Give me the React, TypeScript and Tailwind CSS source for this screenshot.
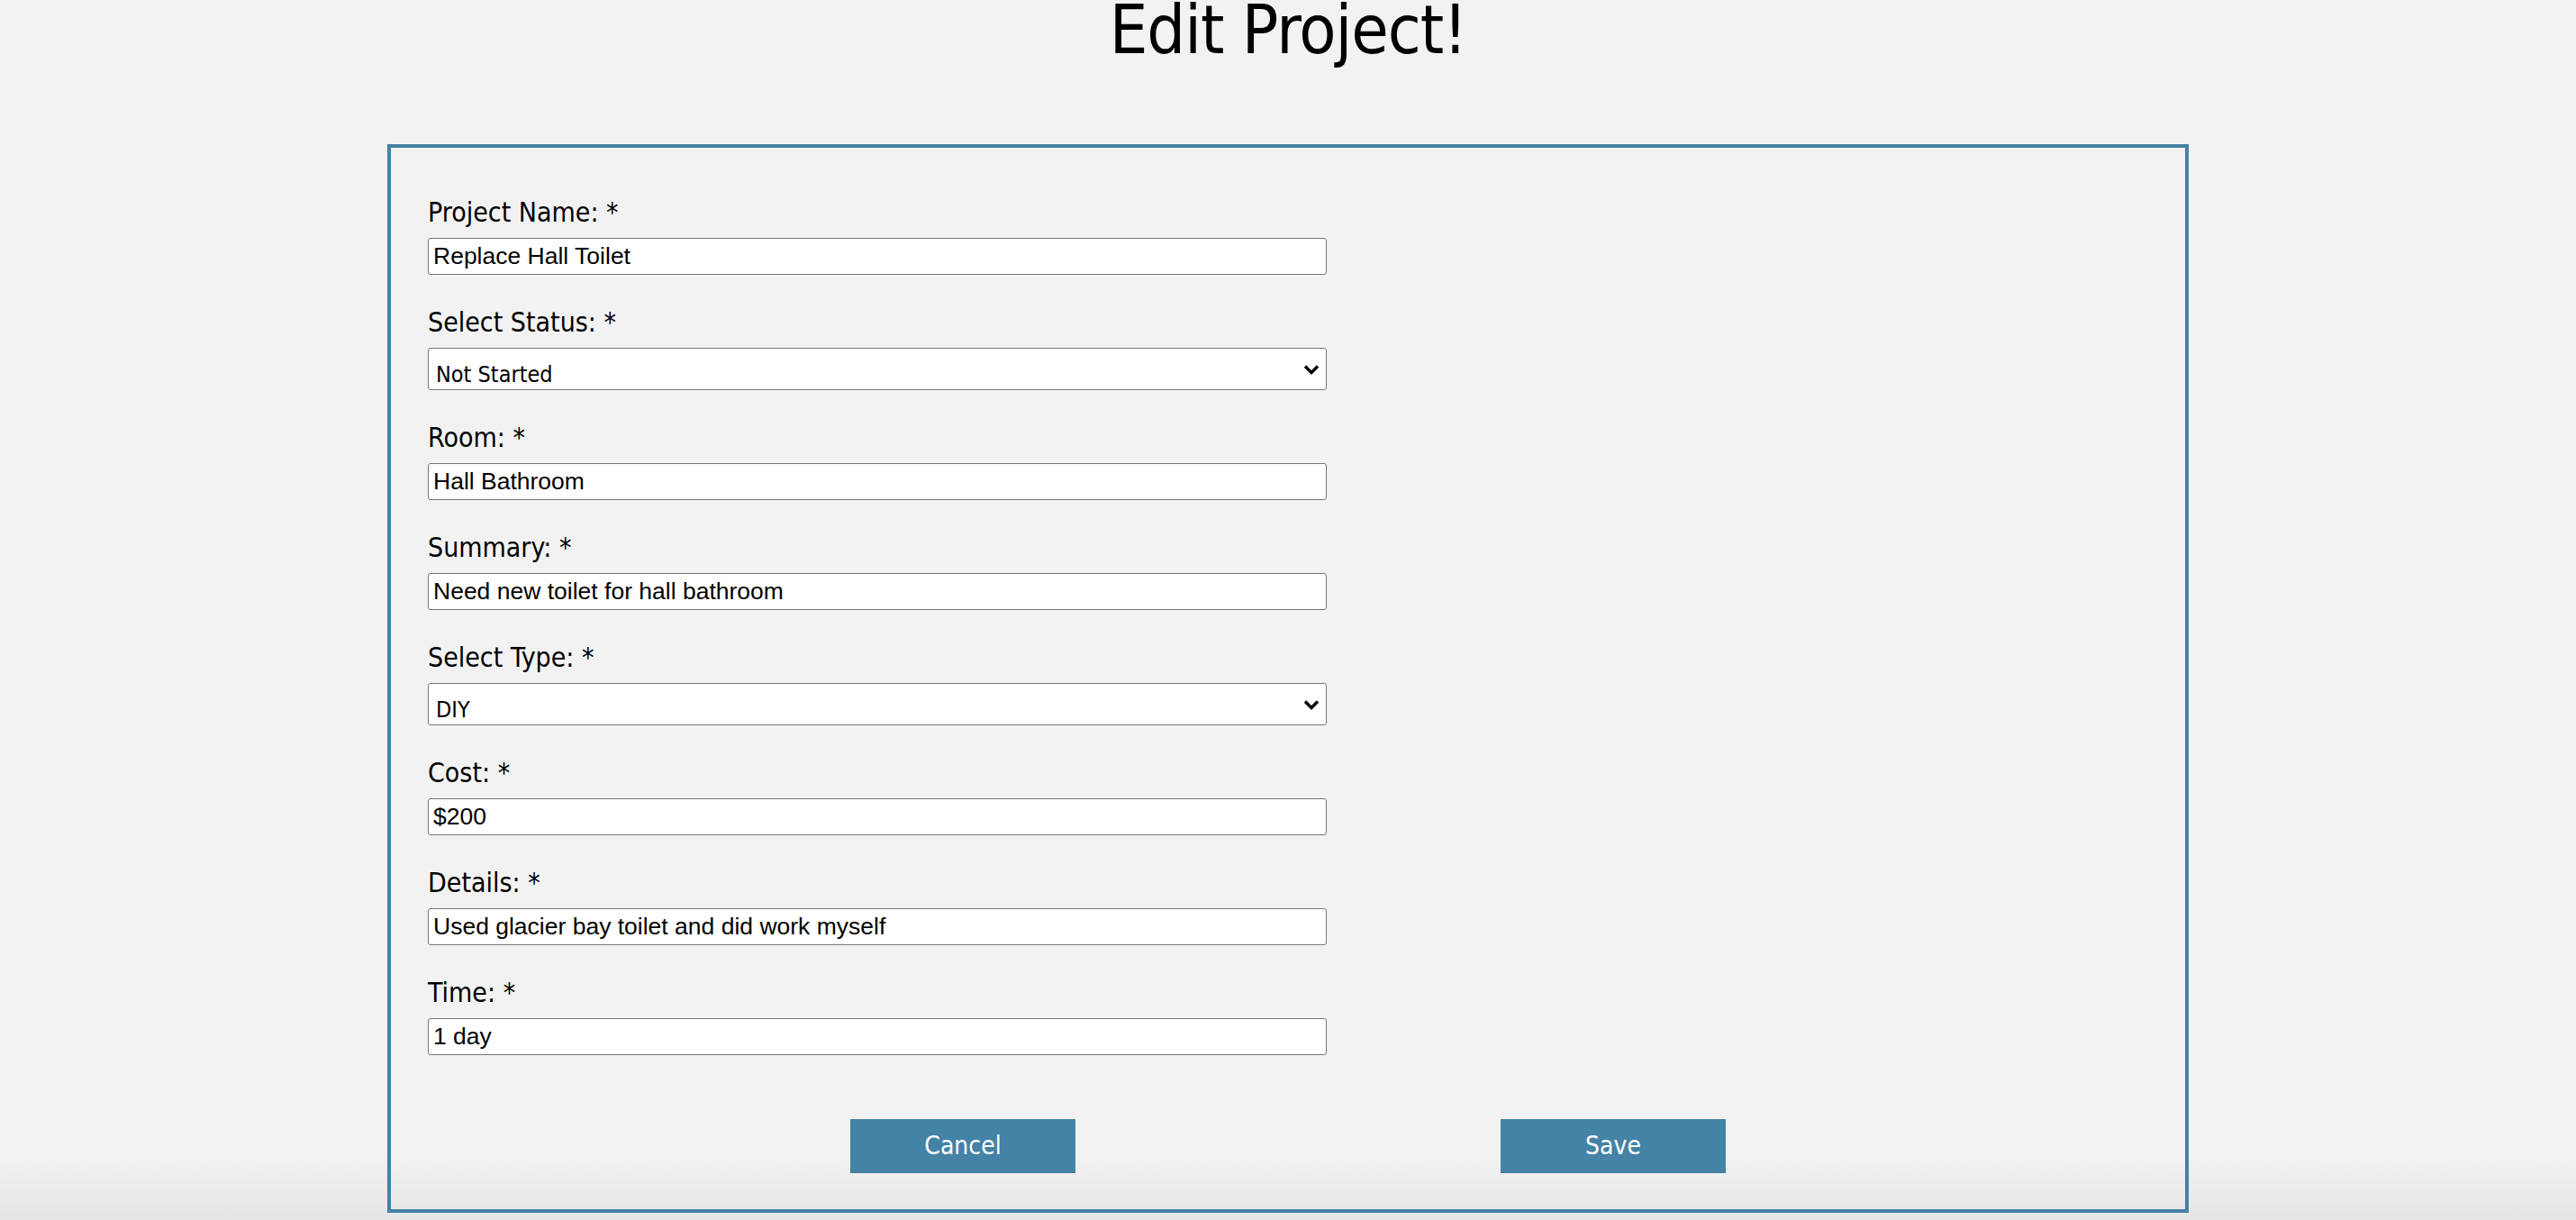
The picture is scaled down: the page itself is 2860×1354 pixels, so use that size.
import React from "react";

type Field = { label: string; value: string; options?: string[] };

const fields: Field[] = [
  { label: "Project Name: *", value: "Replace Hall Toilet" },
  { label: "Select Status: *", value: "Not Started", options: ["Not Started", "In Progress", "Completed"] },
  { label: "Room: *", value: "Hall Bathroom" },
  { label: "Summary: *", value: "Need new toilet for hall bathroom" },
  { label: "Select Type: *", value: "DIY", options: ["DIY", "Contractor"] },
  { label: "Cost: *", value: "$200" },
  { label: "Details: *", value: "Used glacier bay toilet and did work myself" },
  { label: "Time: *", value: "1 day" },
];

function Chevron() {
  return (
    <svg width="18" height="12" viewBox="0 0 18 12" className="pointer-events-none absolute right-[8px] top-[18px]">
      <path d="M2 2.5 L9 9.5 L16 2.5" fill="none" stroke="#000" strokeWidth="3.4" />
    </svg>
  );
}

export default function App() {
  return (
    <div className="h-screen overflow-hidden bg-[linear-gradient(to_bottom,#f2f2f2_1285px,#e5e5e5)] font-['DejaVu_Sans_Condensed','DejaVu_Sans',sans-serif] text-black">
      <h1 className="mt-[-4px] mb-[89px] text-center text-[75px] leading-none tracking-[-1px] font-normal">
        Edit Project!
      </h1>

      <form className="mx-auto w-[2000px] border-4 border-[#4482a6] pt-[53px] pb-[40px]">
        <div className="flex flex-col gap-[34px] pl-[41px]">
          {fields.map((f) => (
            <div key={f.label}>
              <label className="block text-[30px] leading-[38px] mb-[9px]">{f.label}</label>
              {f.options ? (
                <div className="relative w-[998px]">
                  <select
                    defaultValue={f.value}
                    className="block h-[47px] w-full appearance-none rounded-[3px] border border-[#767676] bg-white pt-[10px] pl-[8px] text-[25px] text-black outline-none"
                  >
                    {f.options.map((o) => (
                      <option key={o}>{o}</option>
                    ))}
                  </select>
                  <Chevron />
                </div>
              ) : (
                <input
                  defaultValue={f.value}
                  className="block h-[41px] w-[998px] rounded-[3px] border border-[#767676] bg-white px-[5px] font-['Liberation_Sans',Arial,sans-serif] text-[26.5px] text-black outline-none"
                />
              )}
            </div>
          ))}
        </div>

        <div className="mt-[71px] flex justify-center gap-[472px]">
          <button type="button" className="h-[60px] w-[250px] bg-[#4482a6] text-[28px] text-white">
            Cancel
          </button>
          <button type="button" className="h-[60px] w-[250px] bg-[#4482a6] text-[28px] text-white">
            Save
          </button>
        </div>
      </form>
    </div>
  );
}
